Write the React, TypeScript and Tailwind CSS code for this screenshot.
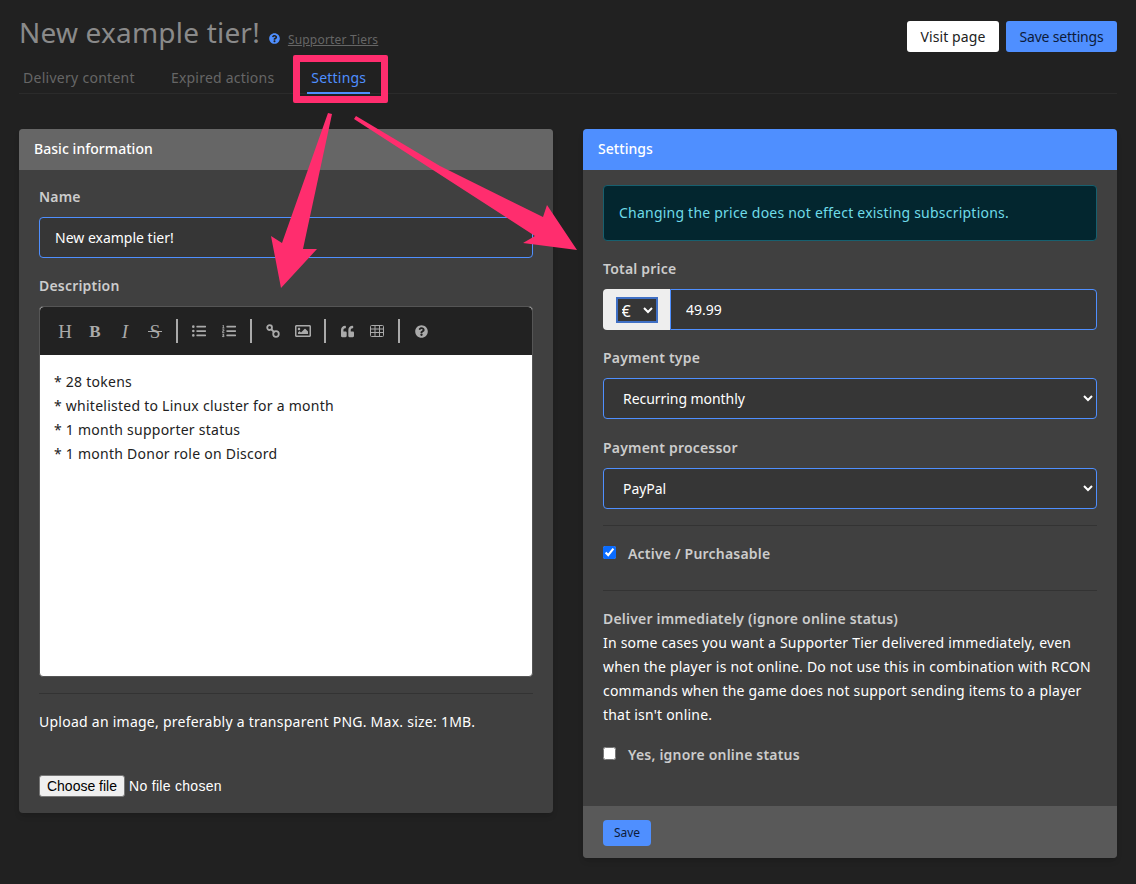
import { FaQuestionCircle, FaListUl, FaListOl, FaRegImage, FaQuoteLeft } from 'react-icons/fa'

function Divider() {
    return <div className="w-[2px] h-6 bg-[#aaa] mx-[6px]" />
}

function LinkIcon() {
    return (
        <svg width="14" height="14" viewBox="0 0 14 14" fill="none" stroke="#aaa" strokeWidth="1.8">
            <circle cx="3.6" cy="3.6" r="2.4" />
            <circle cx="10" cy="10" r="2.8" />
            <path d="M5.5 5.5 L8.5 8.5" />
        </svg>
    )
}

function TableIcon() {
    return (
        <svg width="14" height="12" viewBox="0 0 14 12" fill="none" stroke="#aaa" strokeWidth="1">
            <rect x="0.5" y="0.5" width="13" height="11" rx="1" />
            <path d="M0.5 4H13.5M0.5 7.5H13.5M5 0.5V11.5M9.5 0.5V11.5" />
        </svg>
    )
}

function Toolbar() {
    const btn = 'w-[30px] h-[30px] flex items-center justify-center text-[#aaa]'
    const serif = "font-['Liberation_Serif',serif] text-[19px] leading-none tracking-normal"
    return (
        <div className="h-[48px] bg-[#222] flex items-center pl-[10px] rounded-t-[4px]">
            <div className={btn}><span className={serif}>H</span></div>
            <div className={btn}><span className="font-['Liberation_Serif',serif] text-[17px] leading-none font-bold tracking-normal">B</span></div>
            <div className={btn}><span className={`${serif} italic`}>I</span></div>
            <div className={`${btn} relative`}>
                <span className={serif}>S</span>
                <span className="absolute left-[8px] top-[15px] w-[14px] h-px bg-[#aaa]" />
            </div>
            <Divider />
            <div className={btn}><FaListUl size={14} /></div>
            <div className={btn}><FaListOl size={14} /></div>
            <Divider />
            <div className={btn}><LinkIcon /></div>
            <div className={btn}><FaRegImage size={16} /></div>
            <Divider />
            <div className={btn}><FaQuoteLeft size={13} /></div>
            <div className={btn}><TableIcon /></div>
            <Divider />
            <div className={btn}><FaQuestionCircle size={13} /></div>
        </div>
    )
}

function Annotations() {
    return (
        <div className="absolute inset-0 pointer-events-none">
            <div className="absolute left-[293px] top-[55px] w-[95px] h-[48px] border-[7px] border-[#ff2d6e] rounded-[2px]" />
            <svg className="absolute left-0 top-0" width="1136" height="884">
                <polygon
                    fill="#ff2d6e"
                    points="328,113 332,114 303,249 317,249 281,288 271,236 282,243"
                />
                <polygon
                    fill="#ff2d6e"
                    points="354,119 356,116 440,166 543,217 547,205 577,250 523,243 535,236"
                />
            </svg>
        </div>
    )
}

export default function App() {
    const label = 'block text-[14px] leading-[20px] font-semibold text-[#ccc]'
    const input = 'block w-full h-[41px] bg-[#363636] border border-[#4f8fff] rounded-[4px] text-white text-[14px] tracking-normal outline-none'
    const select = 'block w-full h-[41px] bg-[#363636] border border-[#4f8fff] rounded-[4px] text-white text-[14px] tracking-[-0.05px] pl-[15px] pr-[4px] outline-none'

    return (
        <div className="relative min-h-[884px] bg-[#212121] font-['Noto_Sans',sans-serif] tracking-[0.2px] text-white text-[14px] overflow-hidden">
            <div className="px-[19px]">
                {/* Header */}
                <div className="flex justify-between items-start h-[52px] pt-[13px]">
                    <div className="flex items-baseline">
                        <h1 className="text-[28px] leading-[38px] text-[#8a8a8a]">New example tier!</h1>
                        <FaQuestionCircle className="ml-[9px] text-[#4f8fff] self-center mt-[13px]" size={11} />
                        <a className="ml-[8px] text-[12px] text-[#666] underline translate-y-[1px]">Supporter Tiers</a>
                    </div>
                    <div className="flex gap-[7px] mt-[8px]">
                        <button className="h-[31px] w-[92px] bg-white text-[#222] rounded-[3px] text-[14px] tracking-[0.1px]">Visit page</button>
                        <button className="h-[31px] w-[111px] bg-[#4f8fff] text-[#0d1b3a] rounded-[3px] text-[14px] tracking-[-0.2px]">Save settings</button>
                    </div>
                </div>

                {/* Tabs */}
                <div className="flex h-[42px] border-b border-[#2b2b2b] pl-[4px] text-[#666]">
                    <div className="pt-[15px] tracking-[0.28px]">Delivery content</div>
                    <div className="pt-[15px] ml-[36px] tracking-[0.22px]">Expired actions</div>
                    <div className="ml-[33px] px-[4px] pt-[15px] h-[42px] border-b-2 border-[#4f8fff] text-[#4f8fff]">Settings</div>
                </div>

                <div className="grid grid-cols-2 gap-[30px] mt-[35px] items-start">
                    {/* Basic information */}
                    <div className="bg-[#404040] rounded-[4px] shadow-md">
                        <div className="h-[41px] bg-[#666] rounded-t-[4px] flex items-center px-[15px] pb-[2px] font-medium tracking-[0.05px] text-white">Basic information</div>
                        <div className="px-[20px] pt-[17px] pb-[16px]">
                            <label className={label}>Name</label>
                            <input className={`${input} mt-[10px] pl-[15px]`} defaultValue="New example tier!" />
                            <label className={`${label} mt-[18px]`}>Description</label>
                            <div className="mt-[10px] h-[371px] bg-white rounded-[4px] border border-[#555] overflow-hidden">
                                <Toolbar />
                                <div className="px-[14px] pt-[15px] text-[#222] leading-[24px] tracking-[0.25px]">
                                    <div>* 28 tokens</div>
                                    <div>* whitelisted to Linux cluster for a month</div>
                                    <div>* 1 month supporter status</div>
                                    <div>* 1 month Donor role on Discord</div>
                                </div>
                            </div>
                            <div className="h-px bg-[#333] mt-[16px]" />
                            <p className="mt-[18px] leading-[20px] tracking-[0.25px]">Upload an image, preferably a transparent PNG. Max. size: 1MB.</p>
                            <div className="flex items-center mt-[43px] h-[22px] font-['Liberation_Sans',sans-serif] tracking-normal">
                                <button className="h-[22px] w-[86px] bg-[#efefef] text-black border border-[#767676] rounded-[3px]">Choose file</button>
                                <span className="ml-[4px] tracking-[0.3px]">No file chosen</span>
                            </div>
                        </div>
                    </div>

                    {/* Settings */}
                    <div className="bg-[#404040] rounded-[4px] shadow-md">
                        <div className="h-[41px] bg-[#4f8fff] rounded-t-[4px] flex items-center px-[15px] pb-[2px] font-medium tracking-[0.05px] text-white">Settings</div>
                        <div className="px-[20px] pt-[15px] pb-[41px]">
                            <div className="h-[56px] bg-[#03262f] border border-[#17606f] rounded-[4px] flex items-center px-[15px] pb-[2px] text-[#6fdbe8] tracking-[0.22px]">
                                Changing the price does not effect existing subscriptions.
                            </div>
                            <label className={`${label} mt-[18px]`}>Total price</label>
                            <div className="flex mt-[10px]">
                                <div className="w-[67px] h-[41px] bg-[#eee] rounded-l-[4px] flex items-center justify-center">
                                    <select className="w-[42px] h-[26px] bg-[#363636] border-2 border-[#3f6fc4] text-white text-[16px] tracking-normal outline-none">
                                        <option>€</option>
                                    </select>
                                </div>
                                <input className="flex-1 h-[41px] bg-[#363636] border border-[#4f8fff] rounded-r-[4px] text-white text-[14px] tracking-normal pl-[15px] outline-none" defaultValue="49.99" />
                            </div>
                            <label className={`${label} mt-[18px]`}>Payment type</label>
                            <select className={`${select} mt-[10px]`}>
                                <option>Recurring monthly</option>
                            </select>
                            <label className={`${label} mt-[19px]`}>Payment processor</label>
                            <select className={`${select} mt-[10px]`}>
                                <option>PayPal</option>
                            </select>
                            <div className="h-px bg-[#333] mt-[16px]" />
                            <label className={`${label} flex items-center mt-[18px]`}>
                                <input type="checkbox" defaultChecked className="w-[13px] h-[13px] mb-[3px] accent-[#0a6cff]" />
                                <span className="ml-[12px]">Active / Purchasable</span>
                            </label>
                            <div className="h-px bg-[#333] mt-[26px]" />
                            <div className="mt-[16px] leading-[24px] text-white">
                                <div className="font-semibold text-[#ccc]">Deliver immediately (ignore online status)</div>
                                In some cases you want a Supporter Tier delivered immediately, even when the player is not online. Do not use this in combination with RCON commands when the game does not support sending items to a player that isn't online.
                            </div>
                            <label className={`${label} flex items-center mt-[18px]`}>
                                <input type="checkbox" className="w-[13px] h-[13px] mb-[3px]" />
                                <span className="ml-[12px]">Yes, ignore online status</span>
                            </label>
                        </div>
                        <div className="h-[52px] bg-[#595959] rounded-b-[4px] flex items-center px-[20px] pt-[2px]">
                            <button className="h-[26px] w-[48px] bg-[#4f8fff] text-[#0d1b3a] rounded-[4px] text-[12px] tracking-normal">Save</button>
                        </div>
                    </div>
                </div>
            </div>
            <Annotations />
        </div>
    )
}
